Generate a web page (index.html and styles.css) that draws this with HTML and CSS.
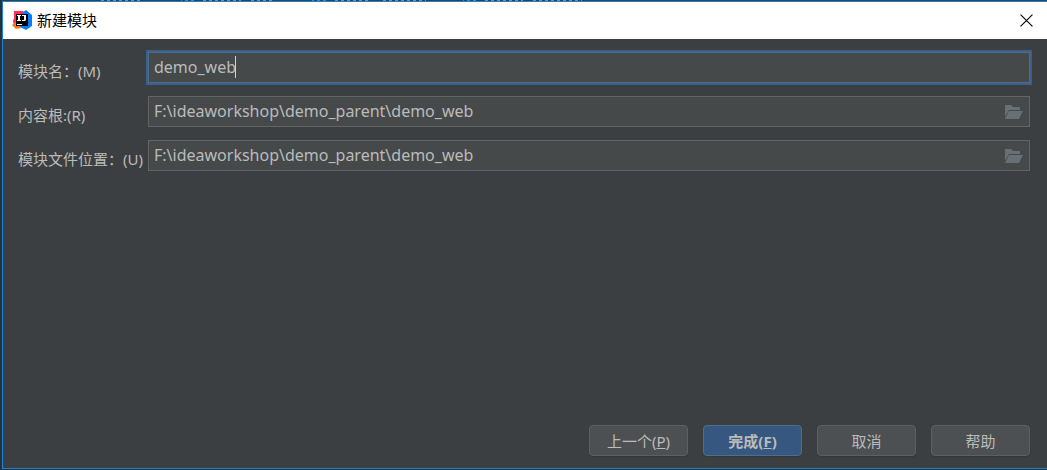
FILE: index.html
```html
<!DOCTYPE html>
<html lang="zh-CN">
<head>
<meta charset="utf-8">
<title>新建模块</title>
<link rel="stylesheet" href="styles.css">
</head>
<body>
<div class="backdrop" aria-hidden="true"></div>
<main class="dialog">
  <header class="titlebar">
    <svg class="logo" viewBox="0 0 20 20" aria-hidden="true">
      <path d="M2 1l9 0 3 5-4 9-8 1-1-5 1-3z" fill="#fe315d"/>
      <path d="M0 15l5-4 4 7-5 1z" fill="#f97a12"/>
      <path d="M11 2l3-2 6 5v11l-6 4-6-3z" fill="#087cfa"/>
      <path d="M4 4h12v12H4z" fill="#000"/>
      <path d="M5 5h4v1H8v4h1v1H5v-1h1V6H5zM10 5h4v5l-1 1h-3v-1h2V6h-2zM5 14h5v1H5z" fill="#fff"/>
    </svg>
    <h1 class="title">新建模块</h1>
    <button class="close" type="button" aria-label="关闭">
      <svg viewBox="0 0 12 12" aria-hidden="true"><path d="M.5.5l11 11M11.500.5l-11 11" stroke="#000" stroke-width="1"/></svg>
    </button>
  </header>
  <form class="form">
    <div class="fields">
      <label for="name">模块名：(M)</label>
      <div class="field focused">
        <input id="name" type="text" value="demo_web">
        <span class="caret"></span>
      </div>
      <label for="root">内容根:(R)</label>
      <div class="field">
        <input id="root" type="text" value="F:\ideaworkshop\demo_parent\demo_web">
        <button class="browse" type="button" aria-label="浏览内容根">
          <svg viewBox="0 0 20 14" aria-hidden="true"><path d="M1 12V0h6l2 2h7v3H5z"/><path d="M5 6h14l-4 8H1z"/></svg>
        </button>
      </div>
      <label for="location">模块文件位置：(U)</label>
      <div class="field">
        <input id="location" type="text" value="F:\ideaworkshop\demo_parent\demo_web">
        <button class="browse" type="button" aria-label="浏览模块文件位置">
          <svg viewBox="0 0 20 14" aria-hidden="true"><path d="M1 12V0h6l2 2h7v3H5z"/><path d="M5 6h14l-4 8H1z"/></svg>
        </button>
      </div>
    </div>
    <footer class="actions">
      <button class="button" type="button">上一个(<u>P</u>)</button>
      <button class="button primary" type="button">完成(<u>F</u>)</button>
      <button class="button" type="button">取消</button>
      <button class="button" type="button">帮助</button>
    </footer>
  </form>
</main>
</body>
</html>
```
FILE: styles.css
```css
* { box-sizing: border-box; }

body {
  margin: 0;
  min-height: 100vh;
  display: flex;
  flex-direction: column;
  padding: 0 0 1px 2px;
  background: #2b3036;
  color: #bbbbbb;
  font: 15px/20px "Noto Sans", "Noto Sans CJK SC", sans-serif;
}

/* Sliver of the editor tabs behind the dialog */
.backdrop {
  height: 1px;
  background:
    repeating-linear-gradient(90deg, #3c3f41 0 3px, transparent 3px 6px),
    linear-gradient(90deg,
      transparent 98px, #8a8a86 98px 140px, transparent 140px 179px,
      #3592b4 179px 194px, transparent 194px 201px,
      #8a8a86 201px 239px, transparent 239px 247px, #8a8a86 247px 272px,
      transparent 272px 310px, #3592b4 310px 325px, transparent 325px 331px,
      #8a8a86 331px 369px, transparent 369px 378px, #8a8a86 378px 424px,
      transparent 424px 461px, #3592b4 461px 476px, transparent 476px 483px,
      #8a8a86 483px 521px, transparent 521px 530px, #8a8a86 530px 580px,
      transparent 580px),
    #3c3f41;
}

.dialog {
  flex: 1;
  display: flex;
  flex-direction: column;
  border: solid #1883d7;
  border-width: 1px 0 1px 1px;
  background: #3c3f41;
}

.titlebar {
  display: flex;
  align-items: center;
  height: 37px;
  padding: 0 14px 1px 9px;
  background: #fff;
  color: #000;
}

.logo { width: 20px; height: 20px; }

.title {
  flex: 1;
  margin: 0 0 0 5px;
  font-size: 15px;
  font-weight: 400;
}

.close {
  display: grid;
  padding: 0;
  border: 0;
  background: none;
}

.close svg { width: 13px; height: 13px; }

.form {
  flex: 1;
  display: flex;
  flex-direction: column;
  justify-content: space-between;
  padding: 13px 17px 12px 15px;
}

.fields {
  display: grid;
  grid-template-columns: 126px 1fr;
  column-gap: 4px;
  row-gap: 13px;
}

.fields label {
  padding-top: 9px;
  white-space: nowrap;
}

.field {
  position: relative;
  display: flex;
  align-items: center;
  height: 31px;
  padding: 0 5px;
  border: 1px solid #646464;
  background: #45494a;
}

.focused {
  border-color: #466d94;
  box-shadow: 0 0 0 2px #3d6185;
}

.field input {
  flex: 1;
  min-width: 0;
  padding: 0 0 2px;
  border: 0;
  outline: 0;
  background: none;
  color: #bbbbbb;
  font: 16px/24px "Noto Sans", "Noto Sans CJK SC", sans-serif;
}

.caret {
  position: absolute;
  left: 86px;
  top: 3px;
  width: 1px;
  height: 22px;
  background: #d0d0d0;
}

.browse {
  display: grid;
  padding: 0;
  border: 0;
  background: none;
}

.browse svg {
  width: 20px;
  height: 14px;
  fill: #667075;
}

.actions {
  display: flex;
  justify-content: flex-end;
  gap: 15px;
}

.button {
  width: 99px;
  height: 31px;
  padding: 0;
  border: 1px solid #5e6060;
  border-radius: 4px;
  background: #4c5052;
  box-shadow: 0 1px 1px #35383a;
  color: #bbbbbb;
  font: inherit;
}

.primary {
  border-color: #4c708c;
  background: #365880;
  font-weight: 700;
}
```
